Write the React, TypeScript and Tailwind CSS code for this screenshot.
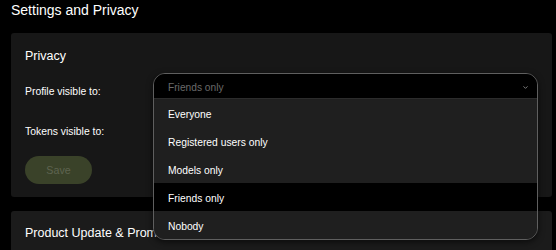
import { ChevronDown } from "lucide-react";

const options = ["Everyone", "Registered users only", "Models only", "Friends only", "Nobody"];

function OpenSelect({ value }: { value: string }) {
  return (
    <div className="absolute left-0 right-0 top-0 z-10 overflow-hidden rounded-[12px] border border-[#5f5f5f] bg-[#1f1f1f] shadow-[0_2px_6px_rgba(0,0,0,0.6)]">
      <div className="flex h-[25px] items-center justify-between border-b border-[#2c2c2c] bg-black pl-[14px] pr-[8px] pt-[3px]">
        <span className="text-[10.2px] text-[#6a6a6a]">{value}</span>
        <ChevronDown className="h-[7px] w-[7px] text-[#8a8a8a]" strokeWidth={3} />
      </div>
      {options.map((opt) => (
        <div
          key={opt}
          className={`flex h-[28px] items-center pl-[14px] pt-[3px] text-[10.3px] text-white ${
            opt === value ? "bg-black" : "bg-[#1f1f1f]"
          }`}
        >
          {opt}
        </div>
      ))}
    </div>
  );
}

export default function App() {
  return (
    <div className="min-h-[250px] bg-black pl-[11px] pr-[4px] font-['Liberation_Sans',Arial,sans-serif] text-white">
      <h1 className="h-[20px] text-[14px] leading-[20px]">Settings and Privacy</h1>

      <section className="mt-[13px] rounded-[3px] bg-[#171717] px-[14px] pb-[13px] pt-[14px]">
        <h2 className="pt-[1px] text-[12.5px] leading-[16px]">Privacy</h2>

        <div className="mt-[9px] flex flex-col gap-[4px]">
          <div className="flex h-[36px] items-center">
            <span className="w-[128px] pt-[1px] text-[10.4px]">Profile visible to:</span>
            <div className="relative h-full flex-1">
              <OpenSelect value="Friends only" />
            </div>
          </div>
          <div className="flex h-[36px] items-center">
            <span className="w-[128px] pt-[2px] text-[10.4px]">Tokens visible to:</span>
            <div className="h-full flex-1 rounded-[12px] border border-[#3a3a3a] bg-black" />
          </div>
        </div>

        <button className="mt-[7px] h-[28px] w-[67px] rounded-full bg-[#3a4229] text-[10.7px] text-[#5e6450]">
          Save
        </button>
      </section>

      <section className="mt-[14px] rounded-[3px] bg-[#1b1b1b] px-[14px] pb-[14px] pt-[14px]">
        <h2 className="text-[12.5px] leading-[16px]">Product Update &amp; Promotions</h2>
      </section>
    </div>
  );
}
